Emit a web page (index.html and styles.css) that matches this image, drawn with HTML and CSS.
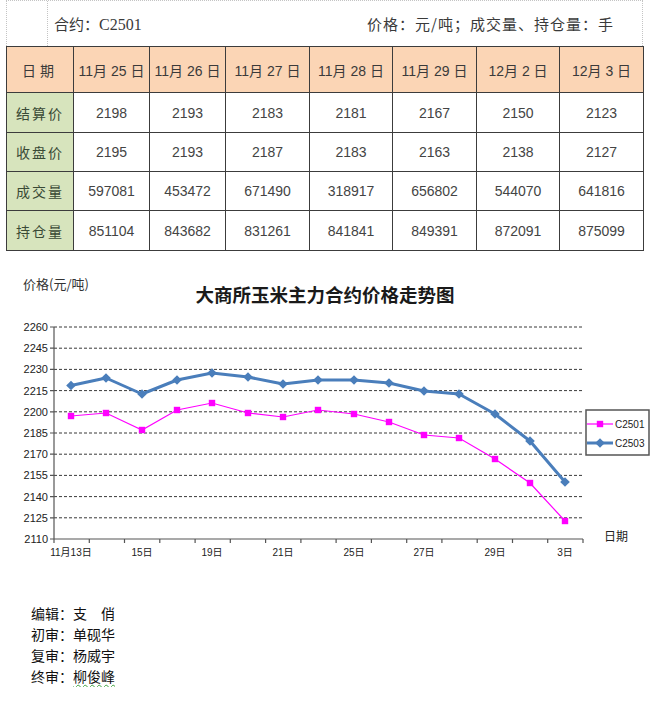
FILE: index.html
```html
<!DOCTYPE html>
<html lang="zh-CN">
<head>
<meta charset="utf-8">
<title>大商所玉米主力合约</title>
<link rel="stylesheet" href="styles.css">
</head>
<body>
<div class="page">
  <div class="caption">
    <div class="caption-gap"></div>
    <div class="caption-main">
      <span class="contract">合约：<span class="latin">C2501</span></span>
      <span class="units">价格：元/吨；成交量、持仓量：手</span>
    </div>
  </div>

  <table class="quotes">
    <colgroup>
      <col class="c-label"><col class="c-n"><col class="c-n"><col class="c-w"><col class="c-m"><col class="c-w"><col class="c-m"><col class="c-w">
    </colgroup>
    <thead>
      <tr class="row-head">
        <th class="lbl">日期</th>
        <th>11月 25 日</th><th>11月 26 日</th><th>11月 27 日</th><th>11月 28 日</th><th>11月 29 日</th><th>12月 2 日</th><th>12月 3 日</th>
      </tr>
    </thead>
    <tbody>
      <tr class="row-a"><th class="lbl">结算价</th><td>2198</td><td>2193</td><td>2183</td><td>2181</td><td>2167</td><td>2150</td><td>2123</td></tr>
      <tr class="row-b"><th class="lbl">收盘价</th><td>2195</td><td>2193</td><td>2187</td><td>2183</td><td>2163</td><td>2138</td><td>2127</td></tr>
      <tr class="row-b"><th class="lbl">成交量</th><td>597081</td><td>453472</td><td>671490</td><td>318917</td><td>656802</td><td>544070</td><td>641816</td></tr>
      <tr class="row-a"><th class="lbl">持仓量</th><td>851104</td><td>843682</td><td>831261</td><td>841841</td><td>849391</td><td>872091</td><td>875099</td></tr>
    </tbody>
  </table>

  <svg class="chart" viewBox="0 250 651 310" width="651" height="310" xmlns="http://www.w3.org/2000/svg">
    <defs>
      <path id="dia" d="M0 -4.8 L4.8 0 L0 4.8 L-4.8 0 Z"/>
      <rect id="sq" x="-3.2" y="-3.2" width="6.4" height="6.4"/>
    </defs>
    <text class="y-title" x="23" y="288">价格(元/吨)</text>
    <text class="c-title" x="325" y="301" text-anchor="middle">大商所玉米主力合约价格走势图</text>

    <g class="grid">
      <line x1="54" y1="326" x2="583" y2="326"/>
      <line x1="54" y1="347.2" x2="583" y2="347.2"/>
      <line x1="54" y1="368.4" x2="583" y2="368.4"/>
      <line x1="54" y1="389.6" x2="583" y2="389.6"/>
      <line x1="54" y1="410.8" x2="583" y2="410.8"/>
      <line x1="54" y1="432" x2="583" y2="432"/>
      <line x1="54" y1="453.2" x2="583" y2="453.2"/>
      <line x1="54" y1="474.4" x2="583" y2="474.4"/>
      <line x1="54" y1="495.6" x2="583" y2="495.6"/>
      <line x1="54" y1="516.8" x2="583" y2="516.8"/>
    </g>

    <g class="axis">
      <line x1="54" y1="326" x2="54" y2="538"/>
      <line x1="54" y1="538" x2="583" y2="538"/>
      <path d="M50 326H54M50 347.2H54M50 368.4H54M50 389.6H54M50 410.8H54M50 432H54M50 453.2H54M50 474.4H54M50 495.6H54M50 516.8H54M50 538H54"/>
      <path d="M54 538V542M89.3 538V542M124.5 538V542M159.8 538V542M195.1 538V542M230.3 538V542M265.6 538V542M300.9 538V542M336.1 538V542M371.4 538V542M406.7 538V542M441.9 538V542M477.2 538V542M512.5 538V542M547.7 538V542M583 538V542"/>
    </g>

    <g class="y-labels" text-anchor="end">
      <text x="48" y="330">2260</text>
      <text x="48" y="351.2">2245</text>
      <text x="48" y="372.4">2230</text>
      <text x="48" y="393.6">2215</text>
      <text x="48" y="414.8">2200</text>
      <text x="48" y="436">2185</text>
      <text x="48" y="457.2">2170</text>
      <text x="48" y="478.4">2155</text>
      <text x="48" y="499.6">2140</text>
      <text x="48" y="520.8">2125</text>
      <text x="48" y="542">2110</text>
    </g>

    <g class="x-labels" text-anchor="middle">
      <text x="71" y="555">11月13日</text>
      <text x="142" y="555">15日</text>
      <text x="212" y="555">19日</text>
      <text x="283" y="555">21日</text>
      <text x="354" y="555">25日</text>
      <text x="424" y="555">27日</text>
      <text x="495" y="555">29日</text>
      <text x="565" y="555">3日</text>
    </g>
    <text class="x-title" x="604" y="540">日期</text>

    <polyline class="s-blue" points="71,384.5 106,377 142,393 177,379 212,372 248,376 283,383 318,379 354,379 389,382 424,390 459,393 495,413 530,440 565,481"/>
    <g class="m-blue">
      <use href="#dia" x="71" y="384.5"/><use href="#dia" x="106" y="377"/><use href="#dia" x="142" y="393"/>
      <use href="#dia" x="177" y="379"/><use href="#dia" x="212" y="372"/><use href="#dia" x="248" y="376"/>
      <use href="#dia" x="283" y="383"/><use href="#dia" x="318" y="379"/><use href="#dia" x="354" y="379"/>
      <use href="#dia" x="389" y="382"/><use href="#dia" x="424" y="390"/><use href="#dia" x="459" y="393"/>
      <use href="#dia" x="495" y="413"/><use href="#dia" x="530" y="440"/><use href="#dia" x="565" y="481"/>
    </g>

    <polyline class="s-pink" points="71,415 106,412 142,429 177,409 212,402 248,412 283,416 318,409 354,413 389,421 424,434 459,437 495,458 530,482 565,520"/>
    <g class="m-pink">
      <use href="#sq" x="71" y="415"/><use href="#sq" x="106" y="412"/><use href="#sq" x="142" y="429"/>
      <use href="#sq" x="177" y="409"/><use href="#sq" x="212" y="402"/><use href="#sq" x="248" y="412"/>
      <use href="#sq" x="283" y="416"/><use href="#sq" x="318" y="409"/><use href="#sq" x="354" y="413"/>
      <use href="#sq" x="389" y="421"/><use href="#sq" x="424" y="434"/><use href="#sq" x="459" y="437"/>
      <use href="#sq" x="495" y="458"/><use href="#sq" x="530" y="482"/><use href="#sq" x="565" y="520"/>
    </g>

    <g class="legend">
      <rect class="legend-box" x="586" y="409" width="63" height="45"/>
      <line class="s-pink" x1="587" y1="423" x2="613" y2="423"/>
      <use class="m-pink" href="#sq" x="600" y="423"/>
      <text x="615" y="427">C2501</text>
      <line class="s-blue" x1="587" y1="442" x2="613" y2="442"/>
      <use class="m-blue" href="#dia" x="600" y="442"/>
      <text x="615" y="446">C2503</text>
    </g>
  </svg>

  <div class="credits">
    <p>编辑：支　俏</p>
    <p>初审：单砚华</p>
    <p>复审：杨威宇</p>
    <p>终审：<span class="spell">柳俊峰</span></p>
  </div>
</div>
</body>
</html>
```

FILE: styles.css
```css
html, body {
  margin: 0;
  padding: 0;
  background: #ffffff;
}

body {
  font-family: "Liberation Sans", "Noto Sans CJK SC", sans-serif;
  color: #333333;
}

.page {
  width: 651px;
}

/* caption strip */
.caption {
  display: flex;
  margin-left: 6px;
  width: 637px;
  height: 46px;
  box-sizing: border-box;
  border: 1px dotted #c4c4c4;
  border-bottom: none;
}

.caption-gap {
  width: 40px;
  border-right: 1px dotted #c4c4c4;
}

.caption-main {
  flex: 1;
  display: flex;
  align-items: center;
  justify-content: space-between;
  padding: 0 28px 0 6px;
  font-family: "Noto Sans CJK SC", sans-serif;
  font-size: 15px;
  color: #3a3a3a;
}

.contract .latin {
  font-family: "Liberation Serif", "Noto Sans CJK SC", serif;
  font-size: 16px;
}

.units {
  letter-spacing: 1px;
}

/* data table */
.quotes {
  margin-left: 6px;
  width: 637px;
  border-collapse: collapse;
  table-layout: fixed;
}

.c-label { width: 67px; }
.c-n { width: 76px; }
.c-w { width: 84px; }
.c-m { width: 83px; }

.quotes th,
.quotes td {
  border: 1px solid #3c3c3c;
  padding: 0;
  text-align: center;
  font-weight: normal;
}

.quotes td {
  font-family: "Liberation Sans", "Noto Sans CJK SC", sans-serif;
  font-size: 14px;
  color: #444444;
}

.row-head { height: 46px; }
.row-a { height: 40px; }
.row-b { height: 39px; }

.row-head th {
  background: #fbd5b5;
  font-family: "Liberation Sans", "Noto Sans CJK SC", sans-serif;
  font-size: 14px;
  color: #3a3a3a;
}

.quotes .lbl {
  background: #d7e4bd;
  font-family: "Noto Sans CJK SC", sans-serif;
  font-size: 14px;
  letter-spacing: 2px;
  color: #3a4a36;
}

.row-head .lbl {
  background: #fbd5b5;
  letter-spacing: 4px;
  color: #3a3a3a;
}

/* chart */
.chart {
  display: block;
  font-family: "Liberation Sans", "Noto Sans CJK SC", sans-serif;
}

.y-title {
  font-size: 13px;
  fill: #333333;
  font-family: "Noto Sans CJK SC", sans-serif;
}

.c-title {
  font-family: "Noto Sans CJK SC", sans-serif;
  font-size: 18.5px;
  font-weight: bold;
  fill: #1a1a1a;
}

.grid line {
  stroke: #222222;
  stroke-width: 0.9;
  stroke-dasharray: 3 2;
}

.axis line,
.axis path {
  stroke: #555555;
  stroke-width: 1.2;
  fill: none;
}

.y-labels text {
  font-size: 11px;
  fill: #222222;
}

.x-labels text {
  font-size: 10px;
  fill: #222222;
}

.x-title {
  font-family: "Noto Sans CJK SC", sans-serif;
  font-size: 12px;
  fill: #222222;
}

.s-blue {
  fill: none;
  stroke: #4a7ebb;
  stroke-width: 3;
  stroke-linejoin: round;
}

.m-blue {
  fill: #4a7ebb;
}

.s-pink {
  fill: none;
  stroke: #ff00ff;
  stroke-width: 1.2;
}

.m-pink {
  fill: #ff00ff;
}

.legend-box {
  fill: #ffffff;
  stroke: #555555;
  stroke-width: 1.5;
}

.legend text {
  font-size: 10px;
  fill: #222222;
}

/* credits */
.credits {
  margin-top: 42px;
  padding-left: 31px;
  font-family: "Noto Sans CJK SC", sans-serif;
  font-size: 14px;
  color: #111111;
}

.credits p {
  margin: 0;
  line-height: 21px;
}

.spell {
  text-decoration: underline wavy #3fa33f;
  text-decoration-thickness: 1px;
  text-underline-offset: 2px;
}
```
